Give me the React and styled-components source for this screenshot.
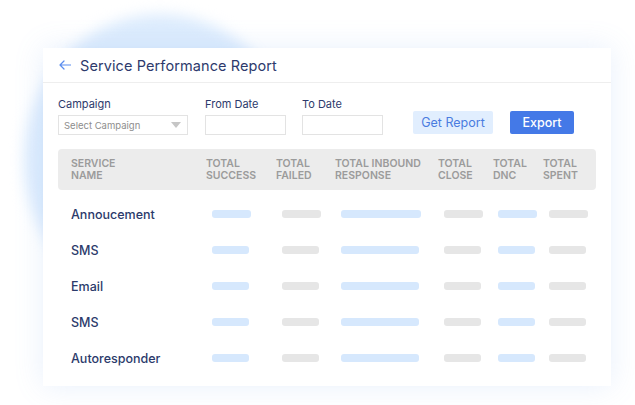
import React from "react";
import styled, { createGlobalStyle } from "styled-components";

const Global = createGlobalStyle`
  html, body { margin: 0; padding: 0; background: #ffffff; }
  body { font-family: "Inter", "Open Sans", sans-serif; }
  * { box-sizing: border-box; }
`;

const Page = styled.div`
  position: relative;
  width: 635px;
  height: 405px;
  overflow: hidden;
  background: #ffffff;
  padding: 48px 0 0 43px;
`;

const Blob = styled.div`
  position: absolute;
  left: 24px;
  top: 14px;
  width: 272px;
  height: 292px;
  border-radius: 50%;
  background: #ddecfd;
  filter: blur(7px);
`;

const Card = styled.div`
  position: relative;
  width: 568px;
  height: 338px;
  background: #ffffff;
  box-shadow: 0 0 28px rgba(110, 160, 235, 0.16);
  display: flex;
  flex-direction: column;
`;

const Header = styled.div`
  height: 35px;
  display: flex;
  align-items: center;
  gap: 9px;
  padding: 0 0 0 16px;
  border-bottom: 1px solid #eeeeee;
`;

const Title = styled.h1`
  margin: 0;
  font-size: 14.5px;
  font-weight: 400;
  color: #2d3a6c;
  letter-spacing: 0.1px;
`;

const Filters = styled.div`
  display: flex;
  align-items: flex-end;
  padding: 14px 0 0 15px;
`;

const Field = styled.div`
  display: flex;
  flex-direction: column;
  gap: 3px;
  margin-right: ${(p) => p.$gap}px;
`;

const Label = styled.label`
  font-size: 11px;
  line-height: 15px;
  color: #2d3a6c;
`;

const Input = styled.div`
  width: ${(p) => p.$w}px;
  height: 20px;
  border: 1px solid #e3e3e3;
  display: flex;
  align-items: center;
  justify-content: space-between;
  padding: 0 6px 0 5px;
  font-size: 9.5px;
  color: #8d8d8d;
`;

const Caret = styled.span`
  width: 0;
  height: 0;
  border-left: 5px solid transparent;
  border-right: 5px solid transparent;
  border-top: 6px solid #c6c6c6;
`;

const Button = styled.button`
  height: 23px;
  width: ${(p) => p.$w}px;
  margin: 0 ${(p) => p.$mr}px 1px 0;
  border: none;
  border-radius: 2px;
  font-family: inherit;
  font-size: ${(p) => (p.$primary ? 12.5 : 12.5)}px;
  background: ${(p) => (p.$primary ? "#4479e7" : "#e1eefe")};
  color: ${(p) => (p.$primary ? "#ffffff" : "#4a7ce0")};
  font-weight: ${(p) => (p.$primary ? 500 : 400)};
  padding: 0;
`;

const Table = styled.div`
  margin: 14px 15px 0 15px;
`;

const cols = "135px 70px 59px 103px 55px 50px 1fr";

const HeadRow = styled.div`
  display: grid;
  grid-template-columns: ${cols};
  align-items: center;
  height: 41px;
  padding-left: 13px;
  background: #ececec;
  border-radius: 4px;
  margin-bottom: 6px;
`;

const HeadCell = styled.div`
  font-size: 10.5px;
  line-height: 12px;
  font-weight: 600;
  color: #9b9b9b;
  text-transform: uppercase;
`;

const Row = styled.div`
  display: grid;
  grid-template-columns: ${cols};
  align-items: center;
  height: 36px;
  padding-left: 13px;
`;

const Name = styled.div`
  font-size: 12.5px;
  font-weight: 500;
  color: #2b3a6b;
`;

const Bar = styled.div`
  height: 8px;
  border-radius: 3px;
  margin-left: ${(p) => p.$ml}px;
  width: ${(p) => p.$w}px;
  background: ${(p) => (p.$blue ? "#d6e8fd" : "#e6e6e6")};
`;

const BackArrow = () => (
  <svg width="12" height="10" viewBox="0 0 12 10" fill="none">
    <path d="M11.5 5H1M5 1L1 5l4 4" stroke="#5b8def" strokeWidth="1.2" strokeLinecap="round" strokeLinejoin="round" />
  </svg>
);

const heads = [
  ["Service", "Name"],
  ["Total", "Success"],
  ["Total", "Failed"],
  ["Total Inbound", "Response"],
  ["Total", "Close"],
  ["Total", "DNC"],
  ["Total", "Spent"],
];

const bars = [
  { blue: true, ml: 6, w: 37 },
  { blue: false, ml: 6, w: 37 },
  { blue: true, ml: 6, w: 78 },
  { blue: false, ml: 6, w: 37 },
  { blue: true, ml: 5, w: 37 },
  { blue: false, ml: 6, w: 37 },
];

const rows = ["Annoucement", "SMS", "Email", "SMS", "Autoresponder"];

export default function App() {
  return (
    <Page>
      <Global />
      <Blob />
      <Card>
        <Header>
          <BackArrow />
          <Title>Service Performance Report</Title>
        </Header>
        <Filters>
          <Field $gap={17}>
            <Label>Campaign</Label>
            <Input $w={130}>
              Select Campaign
              <Caret />
            </Input>
          </Field>
          <Field $gap={16}>
            <Label>From Date</Label>
            <Input $w={81} />
          </Field>
          <Field $gap={30}>
            <Label>To Date</Label>
            <Input $w={81} />
          </Field>
          <Button $w={80} $mr={17}>Get Report</Button>
          <Button $w={64} $mr={0} $primary>Export</Button>
        </Filters>
        <Table>
          <HeadRow>
            {heads.map(([a, b], i) => (
              <HeadCell key={i}>
                {a}
                <br />
                {b}
              </HeadCell>
            ))}
          </HeadRow>
          {rows.map((name, r) => (
            <Row key={r}>
              <Name>{name}</Name>
              {bars.map((b, i) => (
                <Bar key={i} $blue={b.blue} $ml={b.ml} $w={b.w + (r === 0 ? 2 : 0)} />
              ))}
            </Row>
          ))}
        </Table>
      </Card>
    </Page>
  );
}
